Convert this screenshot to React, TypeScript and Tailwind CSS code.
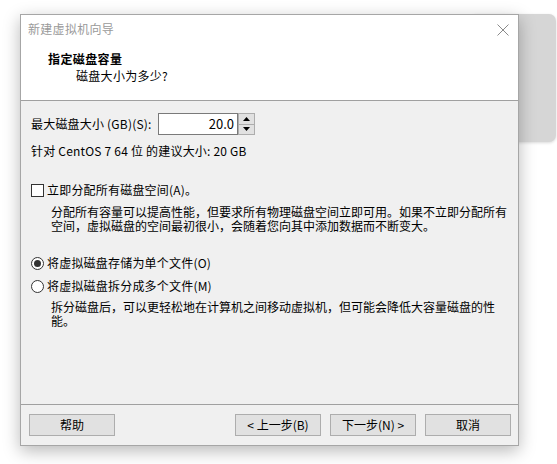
import React from "react";

const font = { fontFamily: '"Noto Sans CJK SC", "Noto Sans", sans-serif' };

function Btn({ children, className = "" }: { children: React.ReactNode; className?: string }) {
  return (
    <div
      className={
        "w-[86px] h-[22px] bg-[#e1e1e1] border border-[#adadad] flex items-center justify-center text-[12px] text-black leading-none " +
        className
      }
    >
      {children}
    </div>
  );
}

export default function App() {
  return (
    <div className="relative w-[557px] h-[464px] bg-white overflow-hidden text-black" style={font}>
      {/* window behind */}
      <div className="absolute left-[470px] top-[14px] w-[86px] h-[128px] rounded-[7px] bg-[#d6d6d6] shadow-[0_1px_3px_rgba(0,0,0,0.15)]" />

      {/* dialog */}
      <div className="absolute left-[20px] top-[14px] w-[499px] h-[432px] border border-[#a6a6a6] bg-[#f0f0f0] flex flex-col shadow-[0_5px_16px_rgba(0,0,0,0.28)]">
        {/* title bar + header */}
        <div className="bg-white flex flex-col h-[86px] border-b border-[#a0a0a0]">
          <div className="h-[27px] flex items-center justify-between pl-[7px] pr-[9px]">
            <span className="text-[12px] text-[#9a9a9a] tracking-[0.3px] leading-none">新建虚拟机向导</span>
            <svg width="12" height="12" viewBox="0 0 12 12" className="mt-[2px]">
              <path d="M0.5 0.5 L11.5 11.5 M11.5 0.5 L0.5 11.5" stroke="#8a8a8a" strokeWidth="1" fill="none" />
            </svg>
          </div>
          <div className="pl-[27px] pt-[10px] text-[12px] font-bold leading-[14px] tracking-[0.4px]">指定磁盘容量</div>
          <div className="pl-[55px] pt-[3px] text-[12px] leading-[14px] tracking-[0.3px]">磁盘大小为多少?</div>
        </div>

        {/* body */}
        <div className="flex-1 flex flex-col pl-[10px] pt-[12px] text-[12px] tracking-[0.2px]">
          <div className="flex items-center h-[22px]">
            <span className="w-[127px]">最大磁盘大小 (GB)(S):</span>
            <div className="w-[80px] h-[22px] bg-white border border-[#7a7a7a] flex items-center justify-end pr-[3px] tracking-normal text-[13px]">
              20.0
            </div>
            <div className="w-[17px] h-[22px] flex flex-col border border-[#adadad] bg-[#e1e1e1]">
              <div className="flex-1 flex items-center justify-center border-b border-[#adadad]">
                <svg width="7" height="4" viewBox="0 0 7 4"><path d="M3.5 0 L7 4 L0 4 Z" fill="#000" /></svg>
              </div>
              <div className="flex-1 flex items-center justify-center">
                <svg width="7" height="4" viewBox="0 0 7 4"><path d="M0 0 L7 0 L3.5 4 Z" fill="#000" /></svg>
              </div>
            </div>
          </div>
          <div className="mt-[9px] leading-[14px]">针对 CentOS 7 64 位 的建议大小: 20 GB</div>

          <div className="mt-[24px] flex items-center h-[16px]">
            <div className="w-[13px] h-[13px] bg-white border border-[#333333]" />
            <span className="ml-[3px]">立即分配所有磁盘空间(A)。</span>
          </div>
          <div className="pl-[20px] mt-[7px] leading-[14px] whitespace-nowrap tracking-normal">
            分配所有容量可以提高性能，但要求所有物理磁盘空间立即可用。如果不立即分配所有
            <br />
            空间，虚拟磁盘的空间最初很小，会随着您向其中添加数据而不断变大。
          </div>

          <div className="mt-[22px] flex items-center h-[16px]">
            <div className="w-[13px] h-[13px] rounded-full bg-white border border-[#333333] flex items-center justify-center">
              <div className="w-[7px] h-[7px] rounded-full bg-[#333333]" />
            </div>
            <span className="ml-[3px]">将虚拟磁盘存储为单个文件(O)</span>
          </div>
          <div className="mt-[7px] flex items-center h-[16px]">
            <div className="w-[13px] h-[13px] rounded-full bg-white border border-[#333333]" />
            <span className="ml-[3px]">将虚拟磁盘拆分成多个文件(M)</span>
          </div>
          <div className="pl-[20px] mt-[6px] leading-[14px] whitespace-nowrap tracking-normal">
            拆分磁盘后，可以更轻松地在计算机之间移动虚拟机，但可能会降低大容量磁盘的性
            <br />
            能。
          </div>
        </div>

        {/* footer */}
        <div className="border-t border-[#a0a0a0] h-[41px] flex items-start pt-[9px] pl-[8px] pr-[7px]">
          <Btn>帮助</Btn>
          <div className="flex-1" />
          <Btn>&lt; 上一步(B)</Btn>
          <Btn className="ml-[9px]">下一步(N) &gt;</Btn>
          <Btn className="ml-[9px]">取消</Btn>
        </div>
      </div>
    </div>
  );
}
